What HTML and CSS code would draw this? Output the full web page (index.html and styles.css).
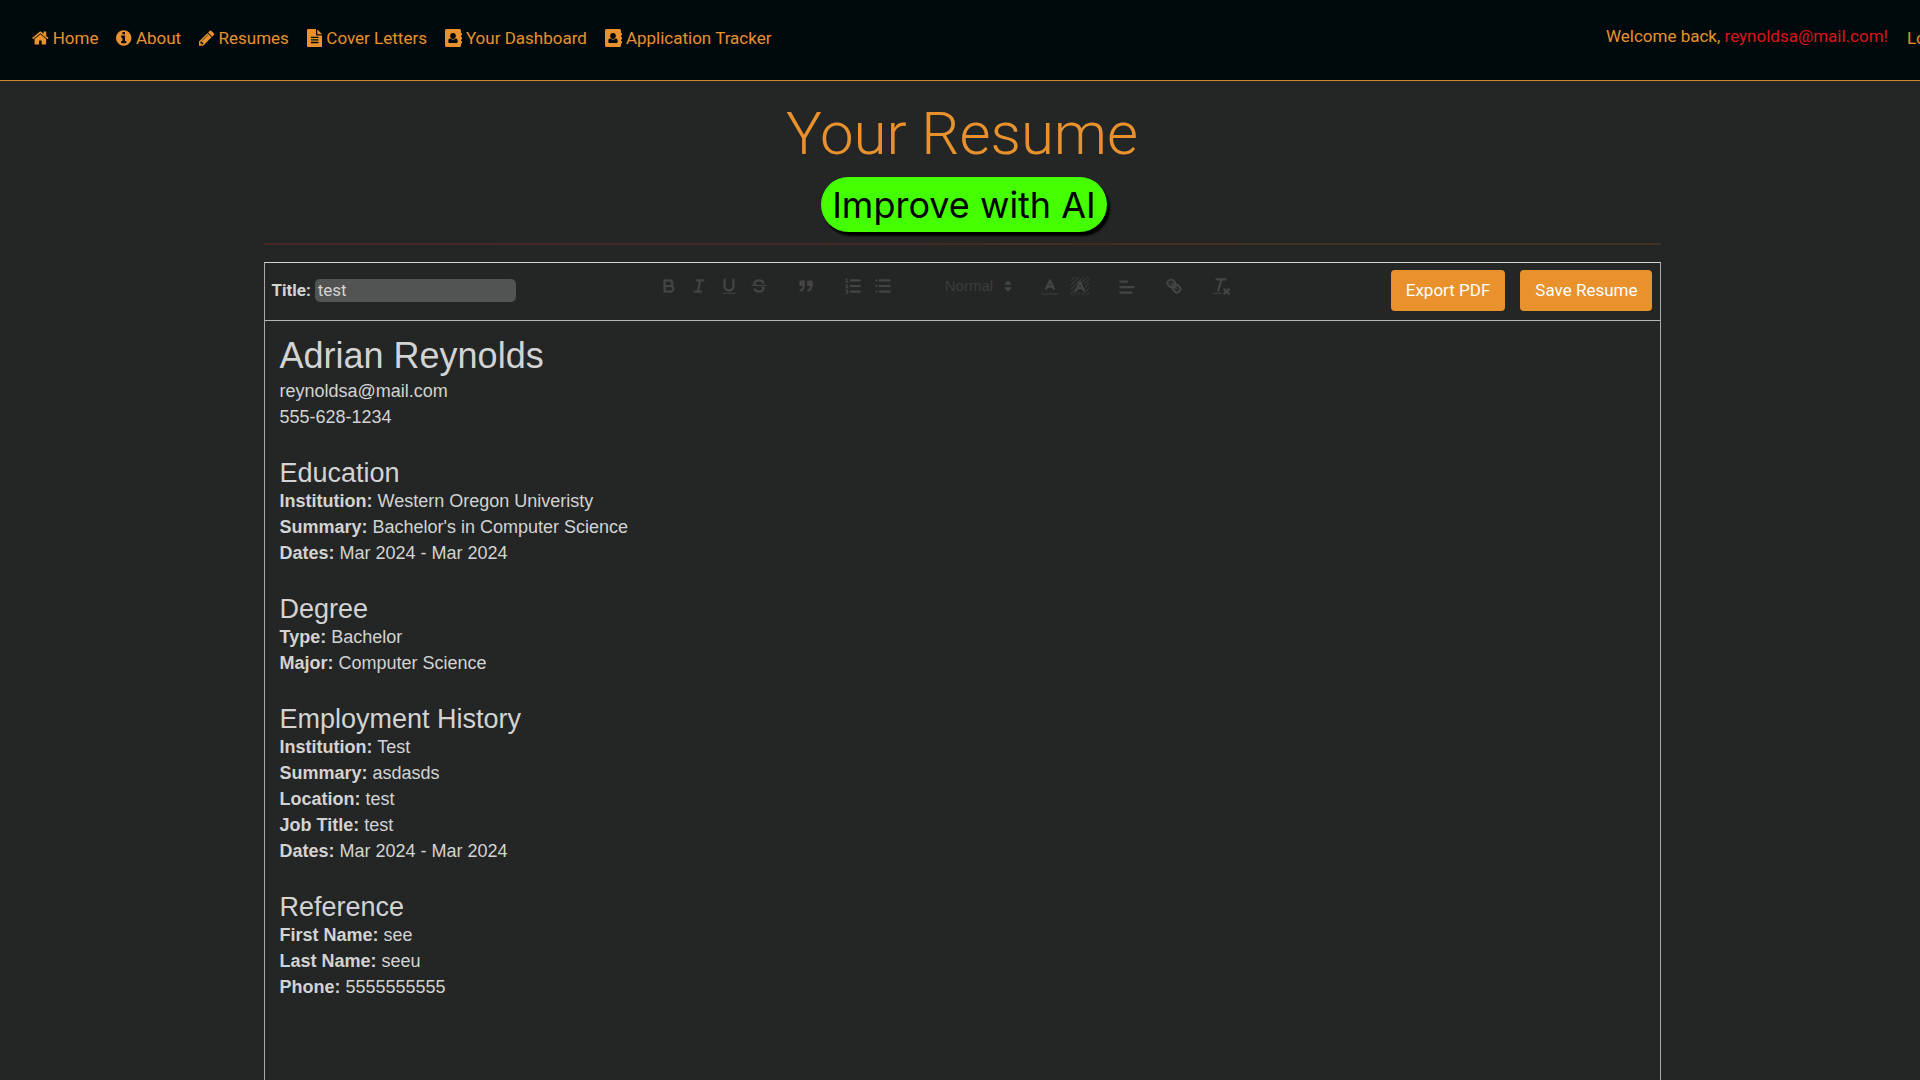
FILE: index.html
```html
<!DOCTYPE html>
<html lang="en">
<head>
<meta charset="utf-8">
<meta name="viewport" content="width=device-width, initial-scale=1">
<title>Your Resume</title>
<link rel="stylesheet" href="styles.css">
</head>
<body>
<header class="navbar">
  <nav class="nav-links">
    <a href="#"><svg class="fa" viewBox="64 0 1664 1792"><path d="M1472 992v480q0 26-19 45t-45 19h-384v-384h-256v384h-384q-26 0-45-19t-19-45v-480q0-1 .5-3t.5-3l575-474 575 474q1 2 1 6zm223-69l-62 74q-8 9-21 11h-3q-13 0-21-7l-692-577-692 577q-12 8-24 7-13-2-21-11l-62-74q-8-10-7-23.500t11-21.500l719-599q32-26 76-26t76 26l244 204v-195q0-14 9-23t23-9h192q14 0 23 9t9 23v408l219 182q10 8 11 21.500t-7 23.500z"/></svg>Home</a>
    <a href="#"><svg class="fa" viewBox="128 0 1536 1792"><path d="M1152 1376v-160q0-14-9-23t-23-9h-96v-512q0-14-9-23t-23-9h-320q-14 0-23 9t-9 23v160q0 14 9 23t23 9h96v320h-96q-14 0-23 9t-9 23v160q0 14 9 23t23 9h448q14 0 23-9t9-23zm-128-896v-160q0-14-9-23t-23-9h-192q-14 0-23 9t-9 23v160q0 14 9 23t23 9h192q14 0 23-9t9-23zm640 416q0 209-103 385.500t-279.500 279.500-385.500 103-385.500-103-279.500-279.500-103-385.500 103-385.500 279.500-279.500 385.500-103 385.500 103 279.500 279.500 103 385.500z"/></svg>About</a>
    <a href="#"><svg class="fa" viewBox="128 0 1536 1792"><path d="M491 1536l91-91-235-235-91 91v107h128v128h107zm523-928q0-22-22-22-10 0-17 7l-542 542q-7 7-7 17 0 22 22 22 10 0 17-7l542-542q7-7 7-17zm-54-192l416 416-832 832h-416v-416zm683 96q0 53-37 90l-166 166-416-416 166-165q36-38 90-38 53 0 91 38l235 234q37 39 37 91z"/></svg>Resumes</a>
    <a href="#"><svg class="fa" viewBox="128 0 1536 1792"><path d="M1596 476q14 14 28 36h-472v-472q22 14 36 28zm-476 164h544v1056q0 40-28 68t-68 28h-1344q-40 0-68-28t-28-68v-1600q0-40 28-68t68-28h800v544q0 40 28 68t68 28zm160 736v-64q0-14-9-23t-23-9h-704q-14 0-23 9t-9 23v64q0 14 9 23t23 9h704q14 0 23-9t9-23zm0-256v-64q0-14-9-23t-23-9h-704q-14 0-23 9t-9 23v64q0 14 9 23t23 9h704q14 0 23-9t9-23zm0-256v-64q0-14-9-23t-23-9h-704q-14 0-23 9t-9 23v64q0 14 9 23t23 9h704q14 0 23-9t9-23z"/></svg>Cover Letters</a>
    <a href="#"><svg class="fa" viewBox="0 0 17 18"><path fill-rule="evenodd" d="M1.500 0h13Q16 0 16 1.500V4h.5q.5 0 .5.500v1.500q0 .5-.5.500H16v1.500h.5q.5 0 .5.500V10q0 .5-.5.500H16V12h.5q.5 0 .5.500V14q0 .5-.5.500H16v2Q16 18 14.500 18h-13Q0 18 0 16.500v-15Q0 0 1.500 0zM8 4a2.800 2.800 0 0 0-2.800 2.800C5.200 8.400 6.400 10 8 10s2.800-1.600 2.800-3.200A2.800 2.800 0 0 0 8 4zM5.300 9.300C3.800 9.500 3.300 11 3.300 12.500c0 1 .6 1.500 1.500 1.500h6.400c.9 0 1.500-.5 1.500-1.500 0-1.500-.5-3-2-3.200C10 10.200 9 10.700 8 10.700s-2-.5-2.700-1.400z"/></svg>Your Dashboard</a>
    <a href="#"><svg class="fa" viewBox="0 0 17 18"><path fill-rule="evenodd" d="M1.500 0h13Q16 0 16 1.500V4h.5q.5 0 .5.500v1.500q0 .5-.5.500H16v1.500h.5q.5 0 .5.500V10q0 .5-.5.500H16V12h.5q.5 0 .5.500V14q0 .5-.5.500H16v2Q16 18 14.500 18h-13Q0 18 0 16.500v-15Q0 0 1.500 0zM8 4a2.800 2.800 0 0 0-2.800 2.800C5.200 8.400 6.400 10 8 10s2.800-1.600 2.800-3.200A2.800 2.800 0 0 0 8 4zM5.300 9.300C3.800 9.500 3.300 11 3.300 12.500c0 1 .6 1.500 1.500 1.500h6.400c.9 0 1.500-.5 1.500-1.500 0-1.500-.5-3-2-3.200C10 10.200 9 10.700 8 10.700s-2-.5-2.700-1.400z"/></svg>Application Tracker</a>
  </nav>
  <div class="account">
    <p class="welcome">Welcome back, <span class="user">reynoldsa@mail.com!</span></p>
    <a href="#">Logout</a>
  </div>
</header>

<main class="page">
  <h1 class="page-title">Your Resume</h1>
  <button type="button" class="improve">Improve with AI</button>
  <hr class="rule">

  <section class="editor">
    <div class="editor-bar">
      <div class="title-field">
        <label for="title">Title:</label>
        <input id="title" type="text" value="test">
      </div>
      <div class="tools">
        <div class="group">
          <button type="button" aria-label="Bold"><svg viewBox="0 0 18 18"><path d="M5,4H9.500A2.500,2.500,0,0,1,12,6.500v0A2.500,2.500,0,0,1,9.500,9H5A0,0,0,0,1,5,9V4A0,0,0,0,1,5,4Z"/><path d="M5,9h5.500A2.500,2.500,0,0,1,13,11.500v0A2.500,2.500,0,0,1,10.500,14H5a0,0,0,0,1,0,0V9A0,0,0,0,1,5,9Z"/></svg></button>
          <button type="button" aria-label="Italic"><svg viewBox="0 0 18 18"><path d="M7 4h6M5 14h6M8 14l2-10"/></svg></button>
          <button type="button" aria-label="Underline"><svg viewBox="0 0 18 18"><path d="M5,3V9a4.012,4.012,0,0,0,4,4H9a4.012,4.012,0,0,0,4-4V3"/><rect class="solid" height="1" rx=".5" width="12" x="3" y="15"/></svg></button>
          <button type="button" aria-label="Strike"><svg viewBox="0 0 18 18"><path class="thin" d="M15.500 8.500h-13"/><path class="solid" d="M9.007,8C6.542,7.791,6,7.519,6,6.500,6,5.792,7.283,5,9,5c1.571,0,2.765.679,2.969,1.309a1,1,0,0,0,1.900-.617C13.356,4.106,11.354,3,9,3,6.200,3,4,4.538,4,6.500a3.200,3.200,0,0,0,.5,1.843Z"/><path class="solid" d="M8.984,10C11.457,10.208,12,10.479,12,11.500c0,.708-1.283,1.500-3,1.500-1.571,0-2.765-.679-2.969-1.309a1,1,0,1,0-1.900.617C4.644,13.894,6.646,15,9,15c2.800,0,5-1.538,5-3.500a3.200,3.200,0,0,0-.5-1.843Z"/></svg></button>
        </div>
        <div class="group">
          <button type="button" aria-label="Quote"><svg viewBox="0 0 18 18"><rect class="full" height="3" width="3" x="4" y="5"/><rect class="full" height="3" width="3" x="11" y="5"/><path d="M7,8c0,4.031-3,5-3,5M14,8c0,4.031-3,5-3,5"/></svg></button>
        </div>
        <div class="group">
          <button type="button" aria-label="Numbered list"><svg viewBox="0 0 18 18"><path d="M7 4h8M7 9h8M7 14h8"/><path class="thin" d="M2.500 5.500h2M3.500 5.500v-3l-1 .5M4.500 10.500h-2c0-.700 1.800-1.200 1.800-2 0-.800-1.500-.700-1.800-.2M2.500 12.700c1.200-.5 2 0 1.700.8-.2.400-.6.500-.9.500.7 0 1.200.3 1.200.9 0 .8-1.300.9-2 .4"/></svg></button>
          <button type="button" aria-label="Bulleted list"><svg viewBox="0 0 18 18"><path d="M6 4h9M6 9h9M6 14h9M3 4h0M3 9h0M3 14h0"/></svg></button>
        </div>
        <div class="picker">
          <select aria-label="Text size"><option>Normal</option></select>
          <svg class="arrows" viewBox="0 0 18 18"><path class="both" d="M6.500 7.300L9 4.500l2.500 2.800zM6.500 10.700L9 13.500l2.500-2.800z"/></svg>
        </div>
        <div class="group">
          <button type="button" aria-label="Text color"><svg viewBox="0 0 18 18"><path class="faint" d="M2 16h14"/><path d="M5.500 11.500L9 4l3.500 7.500M11.600 9.500H6.400"/></svg></button>
          <button type="button" aria-label="Background color"><svg viewBox="0 0 18 18"><path class="hatch" d="M1 4l3-3M1 8l7-7M1 12L12 1M1 16L5.500 11.500M10 6l6-5M3 17l3-3M13 7l4-4M7 17l2-2M14 10l3-3M11 17l6-6M15 17l2-2"/><path d="M5.500 13L9 5.500l3.500 7.500M11.600 11H6.400"/></svg></button>
        </div>
        <div class="group">
          <button type="button" aria-label="Align"><svg viewBox="0 0 18 18"><path d="M3 10h12M3 15h10M3 5h6"/></svg></button>
        </div>
        <div class="group">
          <button type="button" aria-label="Link"><svg viewBox="0 0 18 18"><path d="M7 7l4 4"/><path d="M8.900,4.577a3.476,3.476,0,0,1,.36,4.679A3.476,3.476,0,0,1,4.577,8.900C3.185,7.500,2.035,6.400,4.217,4.217S7.500,3.185,8.900,4.577Z"/><path d="M13.423,9.100a3.476,3.476,0,0,0-4.679-.36,3.476,3.476,0,0,0,.36,4.679c1.392,1.392,2.500,2.542,4.679.36S14.815,10.500,13.423,9.100Z"/></svg></button>
        </div>
        <div class="group">
          <button type="button" aria-label="Clear formatting"><svg viewBox="0 0 18 18"><path d="M5 3h8M6.500 13L9.500 3M12 12l4 4M16 12l-4 4"/><path class="thin" d="M2 15.500h7"/></svg></button>
        </div>
      </div>
      <div class="actions">
        <button type="button" class="btn">Export PDF</button>
        <button type="button" class="btn">Save Resume</button>
      </div>
    </div>

    <article class="document">
      <h2 class="name">Adrian Reynolds</h2>
      <p>reynoldsa@mail.com</p>
      <p>555-628-1234</p>
      <h3>Education</h3>
      <p><strong>Institution:</strong> Western Oregon Univeristy</p>
      <p><strong>Summary:</strong> Bachelor's in Computer Science</p>
      <p><strong>Dates:</strong> Mar 2024 - Mar 2024</p>
      <h3>Degree</h3>
      <p><strong>Type:</strong> Bachelor</p>
      <p><strong>Major:</strong> Computer Science</p>
      <h3>Employment History</h3>
      <p><strong>Institution:</strong> Test</p>
      <p><strong>Summary:</strong> asdasds</p>
      <p><strong>Location:</strong> test</p>
      <p><strong>Job Title:</strong> test</p>
      <p><strong>Dates:</strong> Mar 2024 - Mar 2024</p>
      <h3>Reference</h3>
      <p><strong>First Name:</strong> see</p>
      <p><strong>Last Name:</strong> seeu</p>
      <p><strong>Phone:</strong> 5555555555</p>
    </article>
  </section>
</main>
</body>
</html>
```
FILE: styles.css
```css
* {
  box-sizing: border-box;
}

html,
body {
  min-height: 100%;
}

body {
  margin: 0;
  overflow: hidden;
  background: #242625;
  color: #d3d3d3;
  font-family: Roboto, sans-serif;
  font-size: 17px;
  line-height: 26px;
}

h1,
h2,
h3,
p {
  margin: 0;
  font-weight: 400;
}

button,
input,
select {
  margin: 0;
  padding: 0;
  border: 0;
  background: none;
  color: inherit;
  font: inherit;
}

/* Navigation */
.navbar {
  display: flex;
  justify-content: space-between;
  height: 81px;
  padding: 25px 0 0 32px;
  border-bottom: 1px solid #d6862b;
  background: #000a0c;
  white-space: nowrap;
}

.navbar a {
  color: #e8912d;
  text-decoration: none;
}

.nav-links {
  display: flex;
  gap: 18px;
}

.nav-links a {
  display: flex;
  align-items: center;
  gap: 4px;
  height: 26px;
}

.fa {
  height: 18px;
  fill: currentColor;
}

.account {
  display: flex;
  gap: 19px;
  margin-right: -40px;
}

.welcome {
  line-height: 22px;
  color: #e8912d;
}

.user {
  color: #dc1418;
}

/* Page */
.page {
  display: flex;
  flex-direction: column;
  align-items: center;
  max-width: 1401px;
  margin: 0 auto;
  padding-left: 4px;
}

.page-title {
  padding-top: 17px;
  color: #e8912d;
  font-size: 60px;
  font-weight: 300;
  line-height: 72px;
}

.improve {
  height: 55px;
  margin: 7px 0 0 4px;
  padding: 0 11px;
  border-radius: 28px;
  background: #43ff00;
  box-shadow: 3px 4px 2px #000;
  color: #000;
  font-family: Inter, sans-serif;
  font-size: 36px;
  line-height: 56px;
}

.rule {
  width: 100%;
  height: 2px;
  margin: 11px 0 17px;
  border: 0;
  background: linear-gradient(90deg, #452727, #413222);
}

/* Editor */
.editor {
  width: 100%;
  min-height: 840px;
  border: 1px solid #a8aaa9;
  border-top-color: #d3d3d3;
}

.editor-bar {
  display: flex;
  justify-content: space-between;
  height: 58px;
  padding: 7px;
  border-bottom: 1px solid #b4b6b5;
}

.title-field {
  display: flex;
  align-items: center;
  gap: 4px;
  height: 40px;
}

.title-field label {
  font-weight: 700;
}

.title-field input {
  width: 201px;
  height: 23px;
  padding: 0 3px;
  border-radius: 5px;
  background: #525453;
}

.tools {
  display: flex;
  gap: 17px;
  height: 31px;
  padding-right: 17px;
  color: #444;
}

.group {
  display: flex;
}

.group button {
  display: grid;
  place-items: center;
  width: 30px;
  height: 31px;
}

.group svg,
.arrows {
  width: 20px;
  height: 20px;
  fill: none;
  stroke: currentColor;
  stroke-width: 2;
  stroke-linecap: round;
  stroke-linejoin: round;
}

.tools .solid {
  fill: currentColor;
  stroke: none;
}

.tools .full {
  fill: currentColor;
}

.tools .both {
  fill: currentColor;
  stroke-width: 1;
}

.tools .thin,
.tools .hatch {
  stroke-width: 1;
}

.tools .hatch {
  opacity: 0.6;
}

.tools .faint {
  opacity: 0.4;
}

.picker {
  display: flex;
  align-items: center;
  margin-left: 30px;
}

.picker select {
  width: 53px;
  appearance: none;
  color: #3c3c3c;
  font-family: "Liberation Sans", Arial, sans-serif;
  font-size: 15px;
  line-height: 20px;
}

.actions {
  display: flex;
  gap: 15px;
}

.btn {
  height: 41px;
  padding: 0 15px 2px;
  border-radius: 4px;
  background: #e8912d;
  color: #fff;
}

/* Resume text */
.document {
  padding: 13px 15px;
  font-family: "Liberation Sans", Arial, sans-serif;
  font-size: 18px;
}

.name {
  font-size: 36px;
  line-height: 44px;
}

.document h3 {
  margin-top: 28px;
  font-size: 27px;
  line-height: 30px;
}

.document strong {
  font-weight: 700;
}
```
